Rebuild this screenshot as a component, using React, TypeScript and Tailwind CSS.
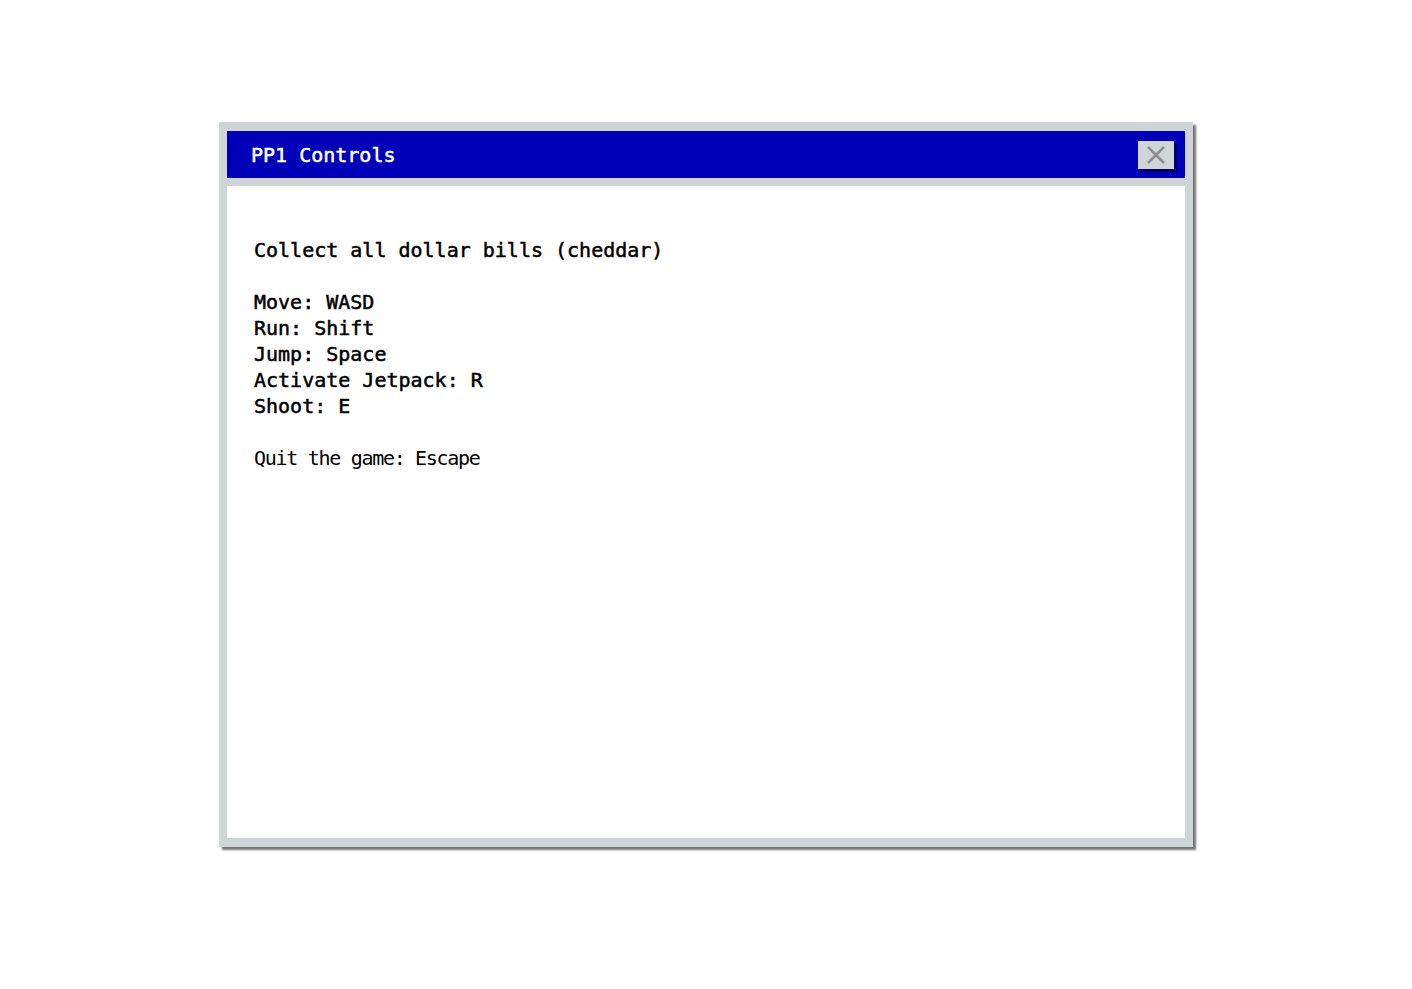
const lines = [
  "Collect all dollar bills (cheddar)",
  "",
  "Move: WASD",
  "Run: Shift",
  "Jump: Space",
  "Activate Jetpack: R",
  "Shoot: E",
  "",
];

function CloseButton() {
  return (
    <button
      type="button"
      className="flex h-[28px] w-[36px] items-center justify-center bg-[#d0d5d7] shadow-[3px_3px_0_#000060]"
    >
      <svg width="20" height="20" viewBox="0 0 20 20">
        <path d="M2 2 L18 18 M18 2 L2 18" stroke="#8e8e8e" strokeWidth="2.5" />
      </svg>
    </button>
  );
}

export default function App() {
  return (
    <div className="min-h-[989px] bg-white pl-[219px] pt-[122px]">
      <div className="flex h-[725px] w-[974px] flex-col gap-[8px] bg-[#cfd4d6] px-[8px] py-[9px] shadow-[3px_3px_2px_rgba(0,0,0,0.55)]">
        <div className="flex h-[47px] shrink-0 items-center justify-between bg-[#0000b8] pl-[24px] pr-[11px]">
          <span className="font-['DejaVu_Sans_Mono',monospace] text-[20px] leading-[26px] text-white [-webkit-text-stroke:0.5px_white]">
            PP1 Controls
          </span>
          <CloseButton />
        </div>
        <div className="flex-1 bg-white pl-[27px] pt-[51px]">
          <div className="font-['DejaVu_Sans_Mono',monospace] text-[20px] leading-[26px] text-black whitespace-pre">
            {lines.map((l, i) => (
              <div key={i} className="h-[26px] [-webkit-text-stroke:0.5px_black]">
                {l}
              </div>
            ))}
            <div className="h-[26px] tracking-[-1.3px]">Quit the game: Escape</div>
          </div>
        </div>
      </div>
    </div>
  );
}
